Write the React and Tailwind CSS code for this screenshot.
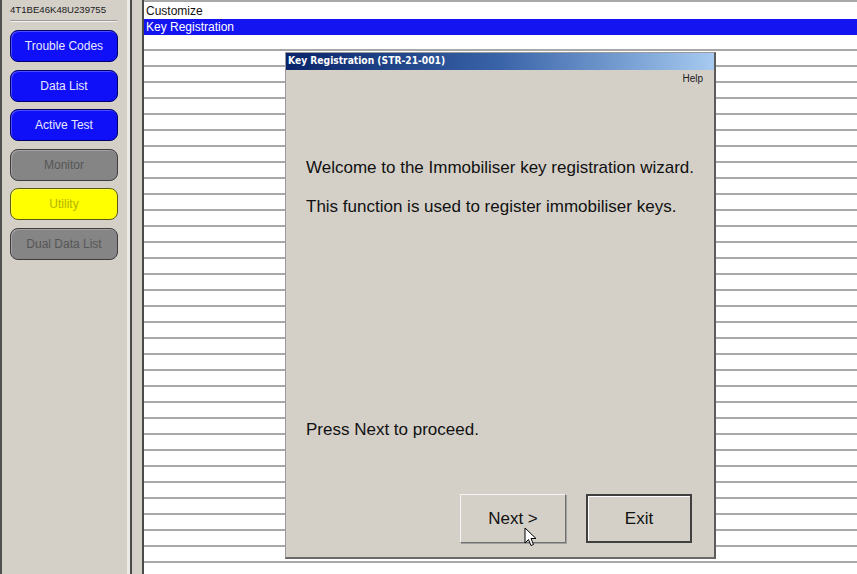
import React from 'react';

const SIDE_BUTTONS = [
  { label: 'Trouble Codes', cls: 'bg-[#1010f8] border-[#00006a] text-[#e8e8ff]' },
  { label: 'Data List', cls: 'bg-[#1010f8] border-[#00006a] text-[#e8e8ff]' },
  { label: 'Active Test', cls: 'bg-[#1010f8] border-[#00006a] text-[#e8e8ff]' },
  { label: 'Monitor', cls: 'bg-[#858585] border-[#3c3c3c] text-[#565656]' },
  { label: 'Utility', cls: 'bg-[#ffff00] border-[#5a5a10] text-[#b4b400]' },
  { label: 'Dual Data List', cls: 'bg-[#858585] border-[#3c3c3c] text-[#565656]' },
];

// empty grid rows below the menu entries
const EMPTY_ROWS = Array.from({ length: 34 });

function Cursor() {
  return (
    <svg className="absolute left-[238px] top-[474px]" width="13" height="20" viewBox="0 0 13 20">
      <path d="M1 1 L1 16 L4.5 12.5 L7 18.5 L9.5 17.5 L7 11.5 L12 11.5 Z" fill="#fff" stroke="#000" strokeWidth="1" strokeLinejoin="round" />
    </svg>
  );
}

function Dialog() {
  return (
    <div className="absolute left-[141px] top-[50px] w-[431px] h-[507px] flex flex-col bg-[#d4d0c8] border-l border-t border-[#9a9a9a] border-r-2 border-b-2 border-r-[#5c5c5c] border-b-[#6a6a6a] font-['Liberation_Sans',Arial,sans-serif]">
      <div className="h-[17px] bg-gradient-to-r from-[#0a246a] via-[#3a64a8] to-[#a6caf0] flex items-center pl-[2px]">
        <span className="text-white font-bold text-[10.2px] leading-none font-['DejaVu_Sans_Condensed','DejaVu_Sans',sans-serif]">
          Key Registration (STR-21-001)
        </span>
      </div>
      <div className="flex justify-end pr-[11px] pt-[3px] h-[15px]">
        <span className="text-[10px] leading-[12px] text-[#202020]">Help</span>
      </div>
      <div className="pl-[20px] text-[17px] leading-[20px] text-[#111]">
        <p className="mt-[73px]">Welcome to the Immobiliser key registration wizard.</p>
        <p className="mt-[19px]">This function is used to register immobiliser keys.</p>
        <p className="mt-[203px]">Press Next to proceed.</p>
      </div>
      <div className="flex justify-end gap-[20px] pr-[22px] mt-[54px] relative">
        <button className="w-[106px] h-[49px] bg-[#d4d0c8] text-[17px] text-[#111] border border-t-[#f4f4f4] border-l-[#f4f4f4] border-r-[#707070] border-b-[#707070] shadow-[1px_1px_0_#a0a0a0]">
          Next &gt;
        </button>
        <button className="w-[106px] h-[49px] bg-[#d4d0c8] text-[17px] text-[#111] border-2 border-[#404040] shadow-[inset_1px_1px_0_#ffffff]">
          Exit
        </button>
      </div>
      <Cursor />
    </div>
  );
}

export default function App() {
  return (
    <div className="w-[857px] h-[574px] flex bg-[#d4d0c8] overflow-hidden font-['Liberation_Sans',Arial,sans-serif]">
      {/* left navigation */}
      <div className="w-[132px] h-full flex flex-col border-l-2 border-l-[#505050] border-r-2 border-r-[#4a4a4a] shadow-[inset_-3px_0_0_#ecebe6] pl-[8px] pr-[12px]">
        <div className="h-[20px] flex items-center pt-[1px] text-[9.6px] text-[#1a1a1a]">
          4T1BE46K48U239755
        </div>
        <div className="h-[2px] border-t border-[#9a9a9a] border-b border-b-[#f2f2f2] w-[107px]" />
        <div className="flex flex-col gap-[7.5px] mt-[8px]">
          {SIDE_BUTTONS.map((b) => (
            <div
              key={b.label}
              className={`w-[108px] h-[32px] rounded-[8px] border flex items-center justify-center text-[12px] shadow-[inset_1px_1px_0_rgba(255,255,255,0.25)] ${b.cls}`}
            >
              {b.label}
            </div>
          ))}
        </div>
      </div>

      {/* splitter */}
      <div className="w-[12px] h-full bg-[#d4d0c8] border-r-2 border-[#4a4a4a]" />

      {/* list */}
      <div className="flex-1 h-full relative bg-white border-t-2 border-[#a8a8a8] pt-[1px] text-[12px] leading-[16px]">
        <div className="h-[16px] pl-[2px] text-[#111]">Customize</div>
        <div className="h-[16px] pl-[2px] bg-[#1414f0] text-white">Key Registration</div>
        <div className="h-[16px] border-b-2 border-[#a8a8a8]" />
        {EMPTY_ROWS.map((_, i) => (
          <div key={i} className="h-[16px] border-b-2 border-[#a8a8a8]" />
        ))}
        <Dialog />
      </div>
    </div>
  );
}
